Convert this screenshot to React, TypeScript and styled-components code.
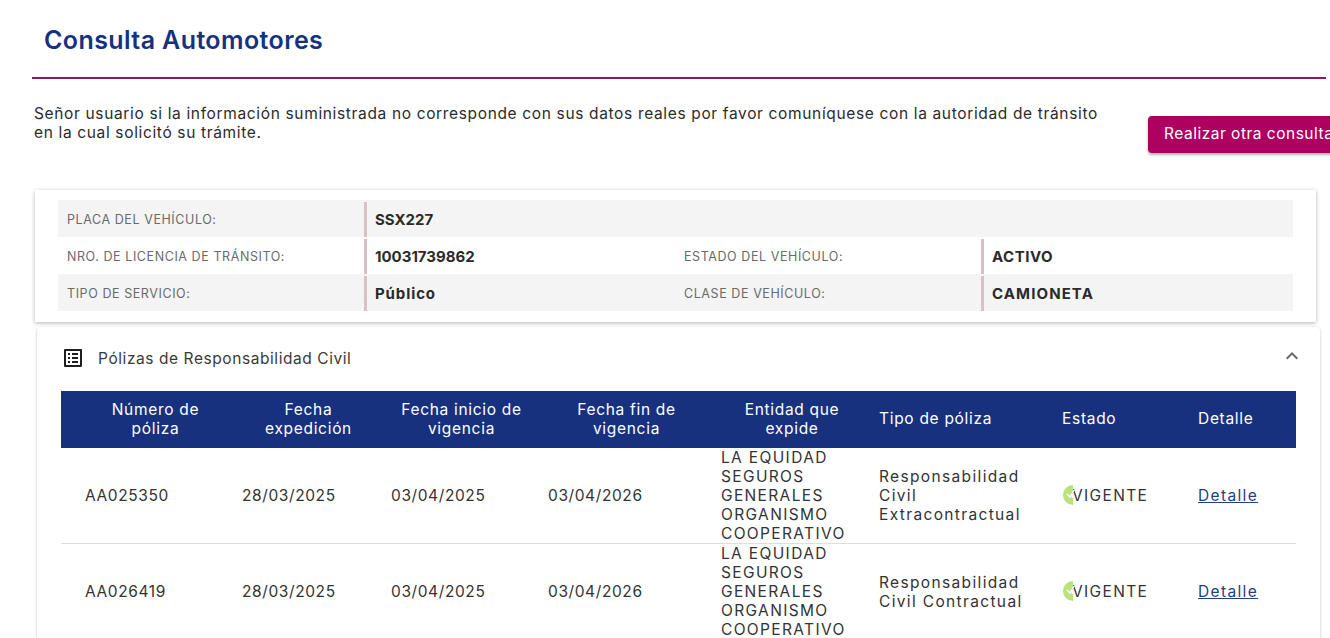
import React from "react";
import styled, { createGlobalStyle } from "styled-components";

const Global = createGlobalStyle`
  html, body { margin: 0; padding: 0; background: #fff; overflow: hidden; height: 638px; }
  #root { width: 1330px; height: 638px; overflow: hidden; }
  * { box-sizing: border-box; }
`;

const fontStack = `Inter, "Noto Sans", "Liberation Sans", sans-serif`;

const Page = styled.div`
  width: 1330px;
  height: 638px;
  overflow: hidden;
  padding: 0 4px 0 32px;
  font-family: ${fontStack};
  color: #212529;
`;
const Header = styled.header`
  height: 79px;
  padding: 25px 0 0 12px;
  border-bottom: 2px solid #8a1a5e;
`;
const Title = styled.h1`
  margin: 0;
  font-size: 25px;
  line-height: 31px;
  font-weight: 600;
  color: #17317f;
  letter-spacing: 0.4px;
`;
const Intro = styled.div`
  display: flex;
  align-items: flex-start;
  padding: 25px 0 0 2px;
  height: 111px;
`;
const IntroText = styled.p`
  margin: 0 44px 0 0;
  width: 1070px;
  flex-shrink: 0;
  font-size: 15.5px;
  line-height: 19px;
  color: #2b2b2b;
  letter-spacing: 0.65px;
`;
const PrimaryButton = styled.button`
  flex-shrink: 0;
  width: 200px;
  height: 37px;
  margin-top: 12px;
  padding: 0 0 2px 16px;
  border: 0;
  border-radius: 4px;
  background: #ad0060;
  color: #fff;
  font-family: ${fontStack};
  font-size: 15.5px;
  letter-spacing: 0.5px;
  text-align: left;
  white-space: nowrap;
  box-shadow: 0 2px 3px rgba(0, 0, 0, 0.3);
`;
const VehicleCard = styled.section`
  width: 1281px;
  height: 132px;
  margin-left: 3px;
  padding: 10px 23px;
  background: #fff;
  box-shadow: 0 1px 4px rgba(0, 0, 0, 0.3);
`;
const DataRow = styled.div<{ $shaded?: boolean }>`
  display: grid;
  grid-template-columns: 306px 311px 306px 312px;
  height: 37px;
  background: ${(p) => (p.$shaded ? "#f4f4f4" : "#fff")};
`;
const DataLabel = styled.div`
  display: flex;
  align-items: center;
  padding: 1px 0 0 9px;
  font-size: 12.5px;
  letter-spacing: 0.58px;
  color: #6a6a6a;
  white-space: nowrap;
`;
const DataValue = styled.div<{ $track?: number }>`
  display: flex;
  align-items: center;
  margin-top: 2px;
  padding: 0 0 1px 8px;
  border-left: 3px solid #d9c0c3;
  font-size: 15px;
  font-weight: 700;
  letter-spacing: ${(p) => p.$track ?? 0}px;
  color: #2a2a2a;
  white-space: nowrap;
`;
const Accordion = styled.section`
  width: 1283px;
  height: 320px;
  margin: 5px 0 0 5px;
  border-radius: 4px 4px 0 0;
  background: #fff;
  box-shadow: 0 1px 3px rgba(0, 0, 0, 0.25);
`;
const AccordionHead = styled.div`
  display: flex;
  align-items: center;
  height: 64px;
  padding: 0 16px 2px 24px;
`;
const AccordionTitle = styled.span`
  flex: 1;
  margin-left: 13px;
  font-size: 15.5px;
  color: #3a3a3a;
  letter-spacing: 0.57px;
`;
const ChevronIcon = styled.svg`
  margin-top: -4px;
`;
const Table = styled.table`
  width: 1235px;
  margin-left: 24px;
  table-layout: fixed;
  border-collapse: separate;
  border-spacing: 0;
`;
const Th = styled.th<{ $left?: boolean }>`
  height: 57px;
  padding: ${(p) => (p.$left ? "0 8px 2px 24px" : "0 0 2px 32px")};
  background: #17317f;
  color: #fff;
  font-size: 15.5px;
  font-weight: 400;
  line-height: 19px;
  text-align: ${(p) => (p.$left ? "left" : "center")};
  letter-spacing: 0.7px;
`;
const Td = styled.td<{ $numeric?: boolean }>`
  height: 96px;
  padding: 0 0 0 24px;
  border-bottom: 1px solid #dedede;
  font-size: 15.5px;
  line-height: 19px;
  color: #333;
  letter-spacing: ${(p) => (p.$numeric ? "0.6px" : "1.35px")};
`;
const Estado = styled.span`
  position: relative;
  display: inline-block;
  padding-left: 10px;
`;
const EstadoMark = styled.svg`
  position: absolute;
  left: 1px;
  top: -1px;
`;
const DetailLink = styled.a`
  color: #24407f;
  text-decoration: underline;
`;

const ListIcon = () => (
  <svg width="24" height="24" viewBox="0 0 24 24" fill="#1f1f1f">
    <path d="M19 5v14H5V5h14m1.1-2H3.9c-.5 0-.9.4-.9.9v16.2c0 .4.4.9.9.9h16.2c.4 0 .9-.5.9-.9V3.9c0-.5-.5-.9-.9-.9zM11 7h6v2h-6V7zm0 4h6v2h-6v-2zm0 4h6v2h-6zM7 7h2v2H7zm0 4h2v2H7zm0 4h2v2H7z" />
  </svg>
);
const Chevron = () => (
  <ChevronIcon width="24" height="24" viewBox="0 0 24 24" fill="#666">
    <path d="M12 8l-6 6 1.41 1.41L12 10.83l4.59 4.58L18 14z" />
  </ChevronIcon>
);
const Mark = () => (
  <EstadoMark width="12" height="20" viewBox="0 0 12 20">
    <path d="M10 0A10 10 0 0 0 10 20L10 13L6.5 10.5L10 7Z" fill="#b7e27c" />
    <path d="M4 9L7 12L11 5" fill="none" stroke="#fff" strokeWidth="1.5" />
  </EstadoMark>
);

const policies = [
  { id: "AA025350", tipo: "Responsabilidad Civil Extracontractual" },
  { id: "AA026419", tipo: "Responsabilidad Civil Contractual" },
];

export default function App() {
  return (
    <Page>
      <Global />
      <Header>
        <Title>Consulta Automotores</Title>
      </Header>
      <Intro>
        <IntroText>
          Señor usuario si la información suministrada no corresponde con sus datos reales por favor comuníquese con la autoridad de tránsito en la cual solicitó su trámite.
        </IntroText>
        <PrimaryButton>Realizar otra consulta</PrimaryButton>
      </Intro>
      <VehicleCard>
        <DataRow $shaded>
          <DataLabel>PLACA DEL VEHÍCULO:</DataLabel>
          <DataValue>SSX227</DataValue>
        </DataRow>
        <DataRow>
          <DataLabel>NRO. DE LICENCIA DE TRÁNSITO:</DataLabel>
          <DataValue>10031739862</DataValue>
          <DataLabel>ESTADO DEL VEHÍCULO:</DataLabel>
          <DataValue $track={0.5}>ACTIVO</DataValue>
        </DataRow>
        <DataRow $shaded>
          <DataLabel>TIPO DE SERVICIO:</DataLabel>
          <DataValue $track={0.9}>Público</DataValue>
          <DataLabel>CLASE DE VEHÍCULO:</DataLabel>
          <DataValue $track={1.1}>CAMIONETA</DataValue>
        </DataRow>
      </VehicleCard>
      <Accordion>
        <AccordionHead>
          <ListIcon />
          <AccordionTitle>Pólizas de Responsabilidad Civil</AccordionTitle>
          <Chevron />
        </AccordionHead>
        <Table>
          <colgroup>
            <col style={{ width: 157 }} />
            <col style={{ width: 149 }} />
            <col style={{ width: 157 }} />
            <col style={{ width: 173 }} />
            <col style={{ width: 158 }} />
            <col style={{ width: 183 }} />
            <col style={{ width: 136 }} />
            <col style={{ width: 122 }} />
          </colgroup>
          <thead>
            <tr>
              <Th>Número de póliza</Th>
              <Th>Fecha expedición</Th>
              <Th>Fecha inicio de vigencia</Th>
              <Th>Fecha fin de vigencia</Th>
              <Th>Entidad que expide</Th>
              <Th $left>Tipo de póliza</Th>
              <Th $left>Estado</Th>
              <Th $left>Detalle</Th>
            </tr>
          </thead>
          <tbody>
            {policies.map((p) => (
              <tr key={p.id}>
                <Td $numeric>{p.id}</Td>
                <Td $numeric>28/03/2025</Td>
                <Td $numeric>03/04/2025</Td>
                <Td $numeric>03/04/2026</Td>
                <Td>LA EQUIDAD SEGUROS GENERALES ORGANISMO COOPERATIVO</Td>
                <Td>{p.tipo}</Td>
                <Td>
                  <Estado>
                    <Mark />
                    VIGENTE
                  </Estado>
                </Td>
                <Td>
                  <DetailLink href="#">Detalle</DetailLink>
                </Td>
              </tr>
            ))}
          </tbody>
        </Table>
      </Accordion>
    </Page>
  );
}
